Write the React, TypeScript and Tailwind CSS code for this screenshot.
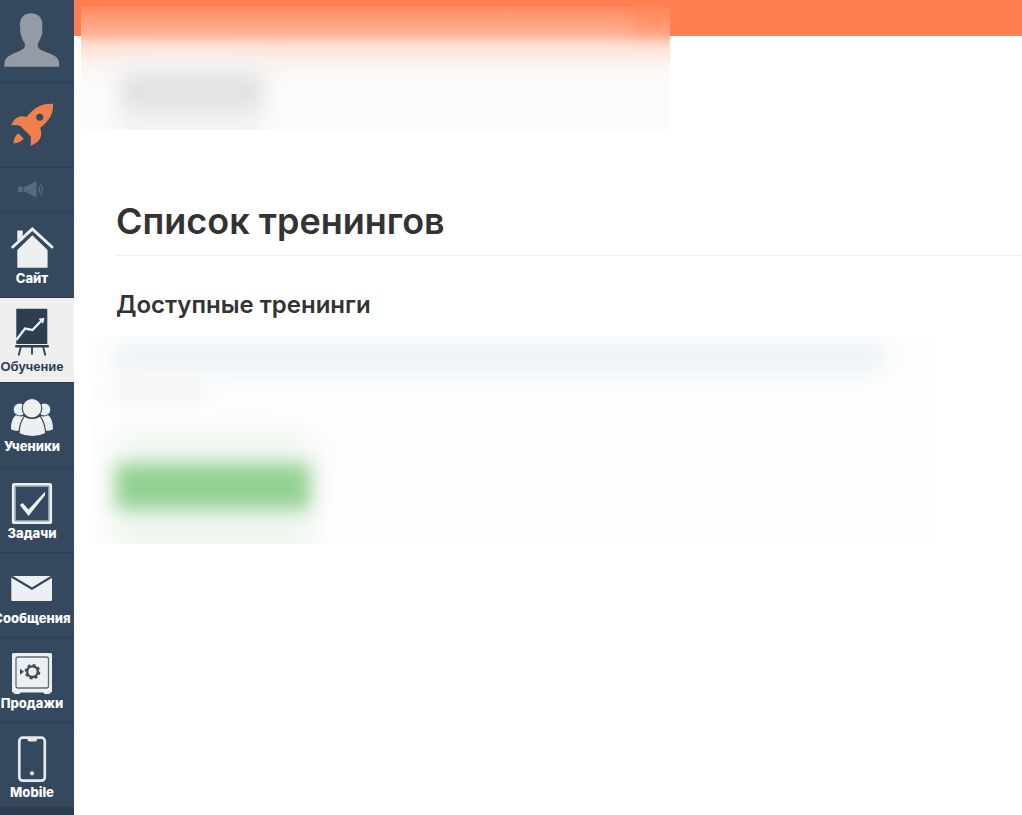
import React from "react";
import clsx from "clsx";

const UserIcon = () => (
  <svg width="64" height="82" viewBox="0 0 64 82" fill="#959ba2">
    <path d="M31 13.3c6.500 0 11 4 11.300 10 .1 2-.3 4-.2 6 .7 1 .5 4-.7 6.500-.8 3-1.800 5-3.400 7.200-.6 2.500-.2 4.500 1.500 6 3 2.200 9 3.600 13.500 6 4 2 5.800 4.500 6 7.500l.3 4.200H4.300l.3-4.200c.2-3 2-5.500 6-7.500 4.500-2.400 9.500-3.800 12.500-6 1.700-1.500 2.300-3.500 1.500-6-1.600-2.200-2.600-4.200-3.200-7.200-1.400-2.500-1.600-5.500-.9-6.500-.5-2-.8-4-.5-6 .5-6 4.500-10 11-10z" />
  </svg>
);

const RocketIcon = () => (
  <svg width="64" height="84" viewBox="0 0 64 84" fill="#f07f4c">
    <path
      fillRule="evenodd"
      d="M53 20.800c.3 5-.3 9.300-3 13.500-2.700 4.200-6 7.500-9.800 10.700.9 3 1.300 5.700.7 8.300-1.200 4.200-5 7.700-10.400 9.500.5-3.500.5-6.500.2-9.500L20.300 43c-2.700-1-5.700-1.300-9.100-.7 1.500-4.600 4.500-7.600 8-8.600 2.500-.7 5-.5 7.400.2 3-3.500 6.300-7 10-9.400 5-3 10.400-3.900 16.400-3.700zM39.700 30.700a3.500 3.500 0 1 0 0 7 3.500 3.500 0 0 0 0-7z"
    />
    <path d="M18.300 50.200l5.400 5.600c-2.600 2.900-5.900 4.500-10.300 4.800.2-4.500 1.800-8.100 4.900-10.400z" />
  </svg>
);

const MegaphoneIcon = () => (
  <svg width="64" height="44" viewBox="0 0 64 44" fill="#566b82">
    <rect x="18" y="18.500" width="4.500" height="5.500" rx=".6" />
    <path d="M23.500 18.700l4-1 9-5v17l-9-5-4-1z" />
    <g fill="none" stroke="#566b82" strokeWidth="1.300">
      <path d="M38.500 18c1.300 2 1.300 4.500 0 6.500M40.300 15.500c2.600 3.500 2.600 8 0 11.500" />
    </g>
  </svg>
);

const HouseIcon = () => (
  <svg width="64" height="56" viewBox="0 0 64 56" fill="#ecf0f1">
    <path d="M17.300 17.500h5.400v5.500l-5.400 5zM17.300 37l15-14.700 15.300 14.700v17.700H17.300z" />
    <path d="M12.800 34L32.300 16 52 34" fill="none" stroke="#ecf0f1" strokeWidth="3" strokeLinecap="round" />
  </svg>
);

const BoardIcon = () => (
  <svg width="64" height="60" viewBox="0 0 64 60" fill="#2c3e50">
    <path d="M16.300 10.700h31v35.300h-31zM15.300 47h33.500v2.400H15.300z" />
    <path d="M16.300 42L25 30.500l7.500 1.500L42 22" fill="none" stroke="#ecf0f1" strokeWidth="2.400" />
    <path d="M38.500 20.800l6-1-1.400 6z" fill="#ecf0f1" />
    <path d="M20.800 49l-2.200 8.500M32 49v7.500M43.200 49l2.200 8.500" stroke="#2c3e50" strokeWidth="1.800" />
  </svg>
);

const StudentsIcon = () => (
  <svg width="64" height="54" viewBox="0 0 64 54" fill="#ecf0f1">
    <circle cx="19.700" cy="26.500" r="6" />
    <circle cx="44.300" cy="26.500" r="6" />
    <path d="M16 32c2 1.600 5 1.800 8.500 1l-6 14.700c-3 0-5.500-.5-7.500-1.500 0-6 1.500-11.500 5-14.200zM48 32c-2 1.600-5 1.800-8.500 1l6 14.700c3 0 5.500-.5 7.500-1.500 0-6-1.500-11.500-5-14.200z" />
    <path
      d="M24.500 33c4.500 3.300 11 3.300 15.500 0 3.300 4.500 5.400 11.500 5.600 17.500-8 4.200-18.500 4.200-26.600 0 .2-6 2.200-13 5.500-17.500z"
      stroke="#34495e"
      strokeWidth="1.200"
    />
    <circle cx="32" cy="25.300" r="9.800" stroke="#34495e" strokeWidth="1.200" />
  </svg>
);

const TaskIcon = () => (
  <svg width="64" height="56" viewBox="0 0 64 56" fill="none">
    <rect x="13.300" y="16.300" width="37.400" height="38.400" rx="1" stroke="#ecf0f1" strokeWidth="2.800" />
    <rect x="15.300" y="18.300" width="33.400" height="34.400" stroke="#a7b2bc" />
    <path d="M19.800 37l2.800-2 5.900 6.500L45 23.800v3.500L28.500 48z" fill="#ecf0f1" />
  </svg>
);

const MailIcon = () => (
  <svg width="64" height="56" viewBox="0 0 64 56">
    <rect x="11.300" y="23" width="40.700" height="25" rx="1" fill="#ecf0f1" />
    <path d="M11.500 23.500L32 35.800l20-12.300" fill="none" stroke="#34495e" strokeWidth="2.200" />
  </svg>
);

const SafeIcon = () => (
  <svg width="64" height="56" viewBox="0 0 64 56" fill="none">
    <path d="M13.500 15h37q1.500 0 1.500 1.500V53q0 1.500-1.500 1.500L49.500 56h-5l-1-1.500h-23l-1 1.500h-5l-1-1.500Q12 54.500 12 53V16.500q0-1.500 1.500-1.500z" fill="#ecf0f1" />
    <rect x="16" y="19" width="32.500" height="31" rx="2" stroke="#5d6d7e" strokeWidth="1.300" />
    <circle cx="32.500" cy="33.700" r="5.300" stroke="#34495e" strokeWidth="2.400" />
    <circle cx="32.500" cy="33.700" r="7" stroke="#34495e" strokeWidth="1.600" strokeDasharray="3 2.500" />
    <path d="M20 30.800l4 2.900-4 3z" fill="#34495e" />
  </svg>
);

const PhoneIcon = () => (
  <svg width="64" height="60" viewBox="0 0 64 60" fill="none">
    <rect x="19.300" y="14.700" width="25.500" height="43" rx="3.500" stroke="#e4e8eb" strokeWidth="2.700" />
    <path d="M27.500 15h9.500v1.500q0 2-2 2h-5.500q-2 0-2-2z" fill="#e4e8eb" />
    <circle cx="32" cy="50.300" r="2.100" fill="#e4e8eb" />
  </svg>
);

const menu = [
  { label: "Сайт", icon: <HouseIcon /> },
  { label: "Обучение", icon: <BoardIcon />, active: true },
  { label: "Ученики", icon: <StudentsIcon /> },
  { label: "Задачи", icon: <TaskIcon /> },
  { label: "Сообщения", icon: <MailIcon /> },
  { label: "Продажи", icon: <SafeIcon /> },
  { label: "Mobile", icon: <PhoneIcon /> },
];

const Sidebar = () => {
  return (
    <aside className="w-[74px] shrink-0 overflow-hidden bg-[#2c3e50]">
      <nav className="flex flex-col">
        <a href="#" aria-label="Профиль" className="h-[83px] bg-[#34495e] border-b border-[#2c3e50]">
          <UserIcon />
        </a>
        <a href="#" aria-label="Старт" className="h-[85px] bg-[#34495e] border-b border-[#2c3e50]">
          <RocketIcon />
        </a>
        <a href="#" aria-label="Уведомления" className="h-[45px] bg-[#34495e] border-b border-[#2c3e50]">
          <MegaphoneIcon />
        </a>

        {menu.map((item) => (
          <a
            key={item.label}
            href="#"
            className={clsx(
              "h-[85px] pr-[10px] flex flex-col items-center border-b border-[#2c3e50] text-[13px] leading-[18px]",
              item.active
                ? "bg-[#efefef] text-[#2c3e50] font-bold font-['Liberation_Sans',sans-serif]"
                : "bg-[#34495e] text-white font-extrabold"
            )}
          >
            {item.icon}
            <span className="whitespace-nowrap">{item.label}</span>
          </a>
        ))}
      </nav>
    </aside>
  );
};

const App = () => {
  return (
    <div className="flex min-h-screen bg-white font-['Inter',sans-serif] text-[#333333]">
      <Sidebar />

      <div className="relative flex-1 min-w-0">
        <header className="h-9 bg-[#ff7f50]" />

        {/* blurred school name */}
        <div
          aria-hidden="true"
          className="absolute left-[7px] top-[7px] w-[589px] h-[123px] overflow-hidden bg-[linear-gradient(#ff8b60_0px,#ff9f7b_14px,#ffb193_26px,#fec3ac_31px,#fed8c9_36px,#fde5db_43px,#fcf1ec_54px,#fcf9f8_70px,#fdfcfd_90px)]"
        >
          <div className="absolute -right-3 -top-3 w-12 h-9 bg-[#ff8453]/60 blur-[10px]" />
          <div className="absolute left-[38px] top-[56px] w-[144px] h-[80px] bg-[#f3f2f2] blur-[12px]" />
          <div className="absolute left-[42px] top-[68px] w-[138px] h-[34px] bg-[#e2e2e2] blur-[9px]" />
        </div>

        <main className="pl-[42px] pt-[163px]">
          <h1 className="pb-[11px] border-b border-[#eeeeee] text-[36px] leading-[45px] font-semibold">
            Список тренингов
          </h1>
          <h2 className="mt-[33px] text-2xl font-semibold">Доступные тренинги</h2>

          {/* blurred training card */}
          <div
            aria-hidden="true"
            className="-ml-[26px] mt-[15px] mr-[87px] h-[208px] overflow-hidden bg-[linear-gradient(#fdfdfd_50%,#fefefe)] px-[26px] pt-2"
          >
            <div className="mr-[26px] h-7 bg-[#ebf3f7] blur-[10px]" />
            <div className="mt-2 w-[88px] h-5 bg-[#f4f4f4] blur-[9px]" />
            <div className="mt-9 w-[194px] h-[120px] bg-[#edf6ed] blur-[16px]" />
            <div className="-mt-[92px] w-[194px] h-[45px] bg-[#93d193] blur-[9px]" />
          </div>
        </main>
      </div>
    </div>
  );
};

export default App;
